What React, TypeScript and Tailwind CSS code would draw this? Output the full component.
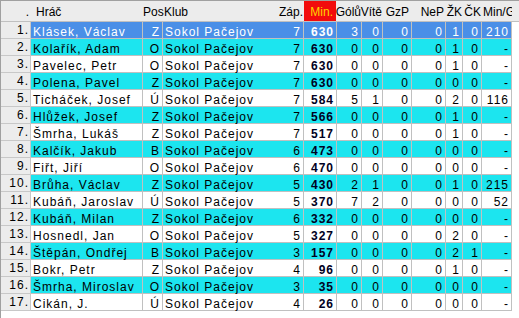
import React from "react";

type Row = [string, string, string, string, string, string, string, string, string, string, string];

const rows: Row[] = [
  ["Klásek, Václav", "Z", "7", "630", "3", "0", "0", "0", "1", "0", "210"],
  ["Kolařík, Adam", "O", "7", "630", "0", "0", "0", "0", "1", "0", "-"],
  ["Pavelec, Petr", "O", "7", "630", "0", "0", "0", "0", "1", "0", "-"],
  ["Polena, Pavel", "Z", "7", "630", "0", "0", "0", "0", "0", "0", "-"],
  ["Ticháček, Josef", "Ú", "7", "584", "5", "1", "0", "0", "2", "0", "116"],
  ["Hlůžek, Josef", "Z", "7", "566", "0", "0", "0", "0", "1", "0", "-"],
  ["Šmrha, Lukáš", "Z", "7", "517", "0", "0", "0", "0", "1", "0", "-"],
  ["Kalčík, Jakub", "B", "6", "473", "0", "0", "0", "0", "0", "0", "-"],
  ["Fiřt, Jiří", "O", "6", "470", "0", "0", "0", "0", "0", "0", "-"],
  ["Brůha, Václav", "Z", "5", "430", "2", "1", "0", "0", "1", "0", "215"],
  ["Kubáň, Jaroslav", "Ú", "5", "370", "7", "2", "0", "0", "0", "0", "52"],
  ["Kubáň, Milan", "Z", "6", "332", "0", "0", "0", "0", "0", "0", "-"],
  ["Hosnedl, Jan", "O", "5", "327", "0", "0", "0", "0", "2", "0", "-"],
  ["Štěpán, Ondřej", "B", "3", "157", "0", "0", "0", "0", "2", "1", "-"],
  ["Bokr, Petr", "Z", "4", "96", "0", "0", "0", "0", "1", "0", "-"],
  ["Šmrha, Miroslav", "O", "3", "35", "0", "0", "0", "0", "0", "0", "-"],
  ["Cikán, J.", "Ú", "4", "26", "0", "0", "0", "0", "0", "0", "-"],
];

const font = { fontFamily: '"Liberation Sans", Arial, sans-serif' };

function Cell({
  w,
  children,
  right = true,
  border = true,
  bold = false,
  extra = "",
}: {
  w: string;
  children: React.ReactNode;
  right?: boolean;
  border?: boolean;
  bold?: boolean;
  extra?: string;
}) {
  return (
    <div
      className={`${w} shrink-0 h-full flex ${right ? "justify-end pr-[2px]" : "justify-start pl-[2px]"} ${
        border ? "border-r border-[#c0c0c0]" : ""
      } whitespace-nowrap pt-[4px] leading-[12px] ${bold ? "font-bold" : ""} ${extra}`}
    >
      <span>{children}</span>
    </div>
  );
}

export default function App() {
  return (
    <div
      className="w-[519px] h-[318px] bg-white border-l border-t border-[#a0a0a0] overflow-hidden text-[12px] tracking-[1px] text-black"
      style={font}
    >
      {/* header */}
      <div className="h-[21px] bg-[#ececec] border-b border-[#c0c0c0] flex leading-[12px] tracking-[0px]">
        <div className="w-[30px] shrink-0 flex justify-end pr-[2px] pt-[5px]">.</div>
        <div className="w-[112px] shrink-0 pl-[5px] pt-[5px]">Hráč</div>
        <div className="w-[20px] shrink-0 pt-[5px] flex justify-start">Pos</div>
        <div className="w-[118px] shrink-0 pt-[5px] pl-[1px]">Klub</div>
        <div className="w-[23px] shrink-0 flex justify-end pr-[1px] pt-[5px] whitespace-nowrap">Záp.</div>
        <div className="w-[33px] shrink-0 flex justify-end pr-[3px] pt-[5px] bg-[#f20c0c] text-[#ffd400] border-r border-[#ececec]">
          Min.
        </div>
        <div className="w-[25px] shrink-0 flex justify-end pr-[1px] pt-[5px] whitespace-nowrap">Gólů</div>
        <div className="w-[21px] shrink-0 flex justify-end pr-[1px] pt-[5px] whitespace-nowrap">Vítě</div>
        <div className="w-[29px] shrink-0 flex justify-end pr-[3px] pt-[5px] whitespace-nowrap">GzP</div>
        <div className="w-[34px] shrink-0 flex justify-end pr-[2px] pt-[5px] whitespace-nowrap">NeP</div>
        <div className="w-[17px] shrink-0 flex justify-end pr-[1px] pt-[5px] whitespace-nowrap">ŽK</div>
        <div className="w-[19px] shrink-0 flex justify-end pr-[1px] pt-[5px] whitespace-nowrap">ČK</div>
        <div className="w-[30px] shrink-0 pl-[1px] pt-[5px] whitespace-nowrap overflow-hidden">Min/G</div>
      </div>
      {/* rows */}
      {rows.map((r, i) => {
        const sel = i === 0;
        const cyan = i % 2 === 1;
        const bg = sel ? "bg-[#4a8fe7] text-white" : cyan ? "bg-[#1ce5ef]" : "bg-white";
        return (
          <div key={i} className="h-[17px] flex">
            <div className="w-[30px] shrink-0 h-full bg-[#ececec] border-b border-r border-[#c8c8c8] flex justify-end pr-[1px] pt-[2px] leading-[12px] text-black">
              {i + 1}.
            </div>
            <div className={`flex h-full border-b border-[#c0c0c0] ${bg}`}>
              <Cell w="w-[112px]" right={false}>
                {r[0]}
              </Cell>
              <Cell w="w-[20px]">{r[1]}</Cell>
              <Cell w="w-[118px]" right={false} border={false}>
                Sokol Pačejov
              </Cell>
              <Cell w="w-[23px]">{r[2]}</Cell>
              <Cell w="w-[33px]" bold extra={sel ? "" : "text-[#000022]"}>
                {r[3]}
              </Cell>
              <Cell w="w-[25px]">{r[4]}</Cell>
              <Cell w="w-[21px]">{r[5]}</Cell>
              <Cell w="w-[29px]">{r[6]}</Cell>
              <Cell w="w-[34px]">{r[7]}</Cell>
              <Cell w="w-[17px]">{r[8]}</Cell>
              <Cell w="w-[19px]">{r[9]}</Cell>
              <Cell w="w-[30px]" extra="overflow-hidden">
                {r[10]}
              </Cell>
            </div>
          </div>
        );
      })}
    </div>
  );
}
